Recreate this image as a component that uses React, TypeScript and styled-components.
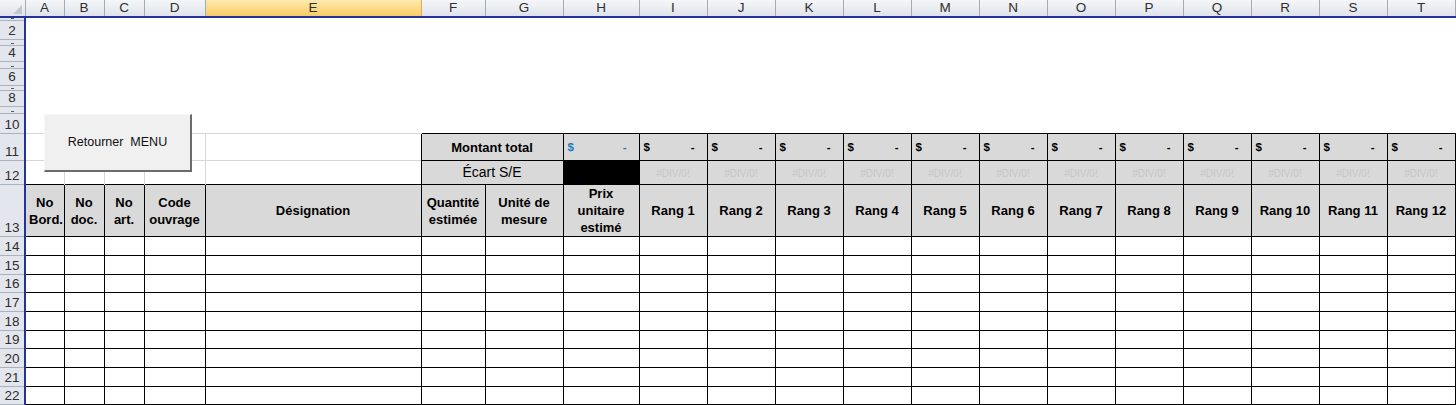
import React from 'react';
import styled, { createGlobalStyle } from 'styled-components';

const GlobalStyle = createGlobalStyle`
  html, body {
    margin: 0;
    padding: 0;
    background: #ffffff;
  }
  body {
    font-family: "Liberation Sans", Arial, sans-serif;
    overflow: hidden;
  }
`;

const COLS = [
  { key: 'A', w: 39 },
  { key: 'B', w: 40 },
  { key: 'C', w: 40 },
  { key: 'D', w: 61 },
  { key: 'E', w: 216 },
  { key: 'F', w: 64 },
  { key: 'G', w: 78 },
  { key: 'H', w: 76 },
  ...'IJKLMNOPQRST'.split('').map((key) => ({ key, w: 68 })),
];

// rows 1-10 : odd ones are squeezed almost shut in the sheet
const TOP_ROWS = [3, 19, 6, 16, 7, 17, 5, 16, 7, 20];
const BODY_ROWS = [19, 19, 18, 19, 19, 18, 19, 19, 18];
const RANGS = Array.from({ length: 12 }, (_, i) => `Rang ${i + 1}`);

const HEADINGS = [
  'No Bord.',
  'No doc.',
  'No art.',
  'Code ouvrage',
  'Désignation',
  'Quantité estimée',
  'Unité de mesure',
  'Prix unitaire estimé',
  ...RANGS,
];

const Frame = styled.div`
  position: relative;
  width: 1456px;
  height: 405px;
  overflow: hidden;
  background: #ffffff;
`;

const Sheet = styled.table`
  border-collapse: collapse;
  table-layout: fixed;
  width: 1455px;
  font-family: "Liberation Sans", Arial, sans-serif;
  color: #000000;
`;

const Row = styled.tr<{ $h: number }>`
  height: ${(p) => p.$h}px;
`;

const Corner = styled.th`
  position: relative;
  height: 16px;
  padding: 0;
  background: linear-gradient(#f4f6f9, #dfe3e9);
  border-right: 1px solid #a3abb6;
  border-bottom: 2px solid #22349a;

  &::after {
    content: '';
    position: absolute;
    right: 3px;
    bottom: 2px;
    border-style: solid;
    border-width: 0 0 9px 9px;
    border-color: transparent transparent #c3c8cf transparent;
  }
`;

const ColHead = styled.th<{ $active?: boolean }>`
  height: 16px;
  padding: 0;
  font-size: 13.5px;
  font-weight: 400;
  line-height: 16px;
  color: #2e2e2e;
  text-align: center;
  background: ${(p) =>
    p.$active
      ? 'linear-gradient(#fde9ae, #f8cd66)'
      : 'linear-gradient(#f4f6f9, #dfe3e9)'};
  border-right: 1px solid ${(p) => (p.$active ? '#e0ad52' : '#a3abb6')};
  border-bottom: 2px solid #22349a;
`;

const RowHead = styled.th`
  padding: 0;
  font-size: 13.5px;
  font-weight: 400;
  color: #2e2e2e;
  background: #e3e7ed;
  border-right: 2px solid #22349a;
  border-bottom: 1px solid #aab2bd;
  vertical-align: bottom;
`;

const RowLabel = styled.div<{ $h: number; $mini?: boolean }>`
  position: relative;
  height: ${(p) => Math.max(p.$h - 1, 1)}px;
  display: flex;
  align-items: flex-end;
  justify-content: center;
  line-height: 14px;
  padding-bottom: 1px;
  box-sizing: border-box;
  overflow: hidden;

  ${(p) =>
    p.$mini &&
    `
    &::after {
      content: '';
      position: absolute;
      left: 11px;
      bottom: 1px;
      width: 3px;
      height: 1px;
      background: #555b63;
    }
  `}
`;

const TopArea = styled.td`
  padding: 0;
  background: #ffffff;
`;

const GridCell = styled.td`
  padding: 0;
  border-top: 1px solid #d6d6d6;
  border-left: 1px solid #d6d6d6;
`;

const fills = {
  white: '#ffffff',
  gray: '#d9d9d9',
  black: '#000000',
};

const Box = styled.td<{ $fill?: keyof typeof fills; $bold?: boolean; $size?: number }>`
  padding: 0 3px;
  border: 1px solid #000000;
  background: ${(p) => fills[p.$fill || 'white']};
  text-align: center;
  vertical-align: middle;
  font-size: ${(p) => p.$size || 13}px;
  font-weight: ${(p) => (p.$bold ? 700 : 400)};
  line-height: 17px;
  overflow: hidden;
`;

const Money = styled.div<{ $blue?: boolean }>`
  display: flex;
  justify-content: space-between;
  align-items: center;
  padding: 0 9px 0 1px;
  font-size: 11.5px;
  font-weight: 700;
  color: ${(p) => (p.$blue ? '#2079c7' : '#000000')};
`;

const DivError = styled.span`
  font-size: 10px;
  color: #c6c6c6;
`;

const MenuButton = styled.button`
  position: absolute;
  left: 44px;
  top: 114px;
  width: 148px;
  height: 58px;
  padding: 0 0 2px;
  background: #f0f0f0;
  border-top: 1px solid #f7f7f7;
  border-left: 1px solid #f7f7f7;
  border-right: 2px solid #6b6b6b;
  border-bottom: 2px solid #6b6b6b;
  font-family: "Liberation Sans", Arial, sans-serif;
  font-size: 12.5px;
  color: #111111;
  white-space: pre;
  cursor: pointer;
`;

export default function App() {
  return (
    <Frame>
      <GlobalStyle />
      <Sheet>
        <colgroup>
          <col style={{ width: 25 }} />
          {COLS.map((c) => (
            <col key={c.key} style={{ width: c.w }} />
          ))}
        </colgroup>
        <thead>
          <tr>
            <Corner />
            {COLS.map((c) => (
              <ColHead key={c.key} $active={c.key === 'E'}>
                {c.key}
              </ColHead>
            ))}
          </tr>
        </thead>
        <tbody>
          {TOP_ROWS.map((h, i) => (
            <Row key={`top-${i}`} $h={h}>
              <RowHead>
                {h < 10 ? (
                  <RowLabel $h={h} $mini />
                ) : (
                  <RowLabel $h={h}>{i + 1}</RowLabel>
                )}
              </RowHead>
              {i === 0 && (
                <>
                  <TopArea colSpan={5} rowSpan={10} />
                  <TopArea colSpan={15} rowSpan={10} />
                </>
              )}
            </Row>
          ))}

          <Row $h={27}>
            <RowHead>
              <RowLabel $h={27}>11</RowLabel>
            </RowHead>
            {[0, 1, 2, 3, 4].map((k) => (
              <GridCell key={k} />
            ))}
            <Box colSpan={2} $fill="gray" $bold>
              Montant total
            </Box>
            <Box $fill="gray">
              <Money $blue>
                <span>$</span>
                <span>-</span>
              </Money>
            </Box>
            {RANGS.map((r) => (
              <Box key={r} $fill="gray">
                <Money>
                  <span>$</span>
                  <span>-</span>
                </Money>
              </Box>
            ))}
          </Row>

          <Row $h={24}>
            <RowHead>
              <RowLabel $h={24}>12</RowLabel>
            </RowHead>
            {[0, 1, 2, 3, 4].map((k) => (
              <GridCell key={k} />
            ))}
            <Box colSpan={2} $fill="gray" $size={14}>
              Écart S/E
            </Box>
            <Box $fill="black" />
            {RANGS.map((r) => (
              <Box key={r} $fill="gray">
                <DivError>#DIV/0!</DivError>
              </Box>
            ))}
          </Row>

          <Row $h={51}>
            <RowHead>
              <RowLabel $h={51}>13</RowLabel>
            </RowHead>
            {HEADINGS.map((t) => (
              <Box key={t} $fill="gray" $bold>
                {t}
              </Box>
            ))}
          </Row>

          {BODY_ROWS.map((h, i) => (
            <Row key={`body-${i}`} $h={h}>
              <RowHead>
                <RowLabel $h={h}>{i + 14}</RowLabel>
              </RowHead>
              {COLS.map((c) => (
                <Box key={c.key} />
              ))}
            </Row>
          ))}
        </tbody>
      </Sheet>
      <MenuButton type="button">Retourner  MENU</MenuButton>
    </Frame>
  );
}
